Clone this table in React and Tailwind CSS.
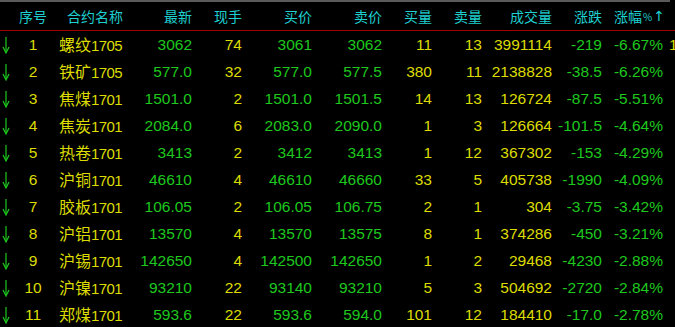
import React from "react";

const rows = [
  ["1", "螺纹", "1705", "3062", "74", "3061", "3062", "11", "13", "3991114", "-219", "-6.67%"],
  ["2", "铁矿", "1705", "577.0", "32", "577.0", "577.5", "380", "11", "2138828", "-38.5", "-6.26%"],
  ["3", "焦煤", "1701", "1501.0", "2", "1501.0", "1501.5", "14", "13", "126724", "-87.5", "-5.51%"],
  ["4", "焦炭", "1701", "2084.0", "6", "2083.0", "2090.0", "1", "3", "126664", "-101.5", "-4.64%"],
  ["5", "热卷", "1701", "3413", "2", "3412", "3413", "1", "12", "367302", "-153", "-4.29%"],
  ["6", "沪铜", "1701", "46610", "4", "46610", "46660", "33", "5", "405738", "-1990", "-4.09%"],
  ["7", "胶板", "1701", "106.05", "2", "106.05", "106.75", "2", "1", "304", "-3.75", "-3.42%"],
  ["8", "沪铝", "1701", "13570", "4", "13570", "13575", "8", "1", "374286", "-450", "-3.21%"],
  ["9", "沪锡", "1701", "142650", "4", "142500", "142650", "1", "2", "29468", "-4230", "-2.88%"],
  ["10", "沪镍", "1701", "93210", "22", "93140", "93210", "5", "3", "504692", "-2720", "-2.84%"],
  ["11", "郑煤", "1701", "593.6", "22", "593.6", "594.0", "101", "12", "184410", "-17.0", "-2.78%"],
];

const GREEN = "text-[#1ec81e]";
const YELLOW = "text-[#dcdc00]";

function DownArrow() {
  return (
    <svg width="10" height="18" viewBox="0 0 10 18" className="block">
      <line x1="5" y1="1" x2="5" y2="16" stroke="#1ec81e" strokeWidth="1.2" />
      <path d="M2 11 L5 17 L8 11" fill="none" stroke="#1ec81e" strokeWidth="1.2" />
    </svg>
  );
}

export default function App() {
  return (
    <div
      className="w-[675px] h-[327px] overflow-hidden bg-black"
      style={{ fontFamily: '"Liberation Sans", "Noto Sans CJK SC", sans-serif' }}
    >
      <div className="h-[2px] w-[670px] bg-[#5a5a5a]" />

      {/* header */}
      <div
        className="flex h-[28px] items-center text-[14px] text-[#1ecfcf] whitespace-nowrap"
        style={{ fontFamily: '"Noto Sans CJK SC", sans-serif' }}
      >
        <div className="w-[16px]" />
        <div className="w-[34px] text-center">序号</div>
        <div className="w-[90px] text-center">合约名称</div>
        <div className="w-[52px] text-right">最新</div>
        <div className="w-[50px] text-right">现手</div>
        <div className="w-[70px] text-right">买价</div>
        <div className="w-[70px] text-right">卖价</div>
        <div className="w-[50px] text-right">买量</div>
        <div className="w-[50px] text-right">卖量</div>
        <div className="w-[70px] text-right">成交量</div>
        <div className="w-[50px] text-right">涨跌</div>
        <div className="w-[61px] pl-[12px] flex items-center">
          涨幅<span className="text-[10px] ml-[1px]">%</span>
          <span className="text-[14px] ml-[1px]" style={{ fontFamily: '"DejaVu Sans", sans-serif' }}>↑</span>
        </div>
      </div>

      <div className="h-[1px] bg-[#a00000]" />

      {/* rows */}
      <div className="text-[15.5px]">
        {rows.map((r, i) => (
          <div key={r[0]} className="flex h-[27px] items-center whitespace-nowrap">
            <div className="w-[16px] flex justify-start pl-[1px]">
              <DownArrow />
            </div>
            <div className={`w-[34px] text-center ${YELLOW}`}>{r[0]}</div>
            <div className={`w-[90px] pl-[9px] ${YELLOW}`}>
              <span className="text-[16px]" style={{ fontFamily: '"Noto Sans CJK SC", sans-serif' }}>
                {r[1]}
              </span>
              <span className="text-[15px] tracking-[-0.6px]">{r[2]}</span>
            </div>
            <div className={`w-[52px] text-right ${GREEN}`}>{r[3]}</div>
            <div className={`w-[50px] text-right ${YELLOW}`}>{r[4]}</div>
            <div className={`w-[70px] text-right ${GREEN}`}>{r[5]}</div>
            <div className={`w-[70px] text-right ${GREEN}`}>{r[6]}</div>
            <div className={`w-[50px] text-right ${YELLOW}`}>{r[7]}</div>
            <div className={`w-[50px] text-right ${YELLOW}`}>{r[8]}</div>
            <div className={`w-[70px] text-right ${YELLOW}`}>{r[9]}</div>
            <div className={`w-[50px] text-right ${GREEN}`}>{r[10]}</div>
            <div className={`w-[61px] text-right ${GREEN}`}>{r[11]}</div>
            <div className={`w-[12px] pl-[6px] overflow-hidden ${YELLOW}`}>{i === 0 ? "1" : ""}</div>
          </div>
        ))}
      </div>
    </div>
  );
}
